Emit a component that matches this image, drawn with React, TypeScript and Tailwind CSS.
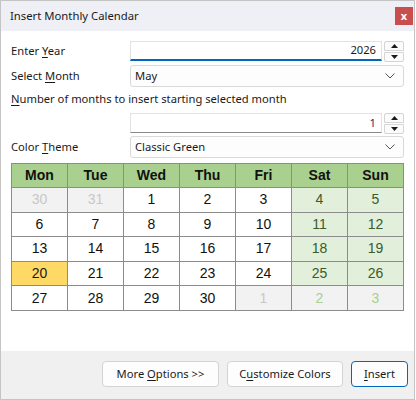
import React from "react";

const U = ({ c }: { c: string }) => <span className="underline underline-offset-2">{c}</span>;

function Spinner() {
  return (
    <div className="flex flex-col w-[20px] h-[21px] ml-[2px] gap-[1px]">
      <div className="flex-1 border border-[#d5d5d5] rounded-t-[2px] bg-[#fbfbfb] flex items-center justify-center">
        <svg width="7" height="4" viewBox="0 0 7 4"><polygon points="0,4 7,4 3.5,0" fill="#1a1a1a" /></svg>
      </div>
      <div className="flex-1 border border-[#d5d5d5] rounded-b-[2px] bg-[#fbfbfb] flex items-center justify-center">
        <svg width="7" height="4" viewBox="0 0 7 4"><polygon points="0,0 7,0 3.5,4" fill="#1a1a1a" /></svg>
      </div>
    </div>
  );
}

function Select({ value }: { value: string }) {
  return (
    <div className="flex-1 h-[22px] border border-[#d9d9d9] rounded-[3px] bg-[#fdfdfd] flex items-center pl-[4px] pr-[8px] text-[#1a1a1a]">
      <span className="flex-1">{value}</span>
      <svg width="10" height="6" viewBox="0 0 10 6"><polyline points="0.5,0.5 5,5 9.5,0.5" fill="none" stroke="#555" strokeWidth="1" /></svg>
    </div>
  );
}

type Cell = { d: number; kind: "other" | "cur" | "today" };

export default function App() {
  const rows: Cell[][] = [];
  const days: Cell[] = [
    { d: 30, kind: "other" },
    { d: 31, kind: "other" },
  ];
  for (let i = 1; i <= 30; i++) days.push({ d: i, kind: i === 20 ? "today" : "cur" });
  days.push({ d: 1, kind: "other" }, { d: 2, kind: "other" }, { d: 3, kind: "other" });
  for (let r = 0; r < 5; r++) rows.push(days.slice(r * 7, r * 7 + 7));
  const heads = ["Mon", "Tue", "Wed", "Thu", "Fri", "Sat", "Sun"];

  const cellClass = (c: Cell, col: number) => {
    const weekend = col >= 5;
    if (c.kind === "today") return "bg-[#ffd966] text-[#1a1a1a]";
    if (c.kind === "other") return weekend ? "bg-[#f2f2f2] text-[#a9d08e]" : "bg-[#f2f2f2] text-[#c8c8c8]";
    return weekend ? "bg-[#e2efda] text-[#3b5b2b]" : "bg-white text-[#111]";
  };

  return (
    <div className="w-[415px] h-[400px] border border-[#c4c4c4] bg-white flex flex-col text-[11.2px] text-[#1a1a1a]" style={{ fontFamily: '"Segoe UI", "Noto Sans", sans-serif' }}>
      <div className="h-[30px] bg-[#eff0f6] flex items-center pl-[9px] pr-[1px] shrink-0">
        <span className="flex-1 text-[11.3px] text-[#1a1a1a]">Insert Monthly Calendar</span>
        <div className="w-[18px] h-[18px] bg-[#c94f4f] flex items-center justify-center text-white text-[11px] font-bold leading-none pb-[2px]">x</div>
      </div>
      <div className="flex-1 px-[10px] pt-[10px] flex flex-col">
        <div className="flex items-center h-[20px]">
          <div className="w-[119px]">Enter <U c="Y" />ear</div>
          <div className="flex-1 h-[20px] border border-[#e3e3e3] border-b-2 border-b-[#0067c0] bg-white flex items-center justify-end pr-[5px]">2026</div>
          <Spinner />
        </div>
        <div className="flex items-center h-[22px] mt-[4px]">
          <div className="w-[119px]">Select <U c="M" />onth</div>
          <Select value="May" />
        </div>
        <div className="h-[18px] mt-[3px] flex items-center"><span><U c="N" />umber of months to insert starting selected month</span></div>
        <div className="flex items-center h-[20px] mt-[5px]">
          <div className="w-[119px]" />
          <div className="flex-1 h-[20px] border border-[#e3e3e3] border-b-[#8a8a8a] bg-white flex items-center justify-end pr-[5px] text-[#3a1560]">1</div>
          <Spinner />
        </div>
        <div className="flex items-center h-[22px] mt-[3px]">
          <div className="w-[119px]">Color <U c="T" />heme</div>
          <Select value="Classic Green" />
        </div>
        <table className="mt-[5px] w-[393px] border-collapse table-fixed" style={{ fontFamily: '"Liberation Sans", Arial, sans-serif' }}>
          <thead>
            <tr>
              {heads.map((h) => (
                <th key={h} className="h-[24px] border border-[#8c8c8c] bg-[#a9d08e] text-[14px] font-bold text-[#111]">{h}</th>
              ))}
            </tr>
          </thead>
          <tbody>
            {rows.map((r, ri) => (
              <tr key={ri}>
                {r.map((c, ci) => (
                  <td key={ci} className={"h-[24.6px] border border-[#8c8c8c] text-center text-[14px] " + cellClass(c, ci)}>{c.d}</td>
                ))}
              </tr>
            ))}
          </tbody>
        </table>
      </div>
      <div className="h-[48px] bg-[#f0f0f0] flex items-start justify-end pt-[10px] pr-[6px] gap-[8px] shrink-0">
        <button className="w-[117px] h-[26px] rounded-[4px] border border-[#d3d3d3] bg-[#fdfdfd]">More <U c="O" />ptions &gt;&gt;</button>
        <button className="w-[116px] h-[26px] rounded-[4px] border border-[#d3d3d3] bg-[#fdfdfd]">C<U c="u" />stomize Colors</button>
        <button className="w-[57px] h-[26px] rounded-[4px] border border-[#0067c0] bg-[#fdfdfd]"><U c="I" />nsert</button>
      </div>
    </div>
  );
}
